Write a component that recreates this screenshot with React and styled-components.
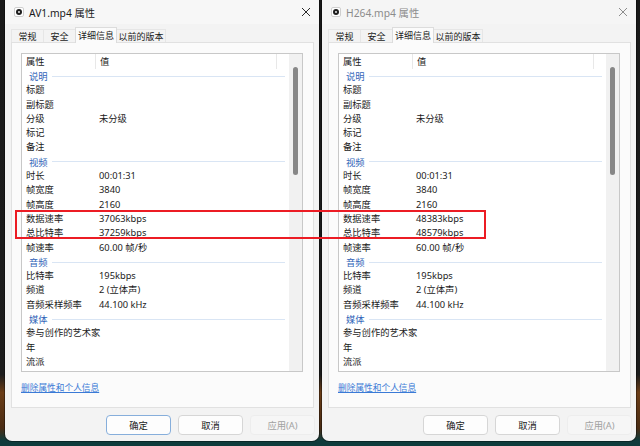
import React from 'react';
import styled, { createGlobalStyle } from 'styled-components';

const GlobalStyle = createGlobalStyle`
  html, body {
    margin: 0;
    padding: 0;
  }
  body {
    background: #151a1a;
    font-family: "Segoe UI", "Noto Sans", "Noto Sans CJK SC", sans-serif;
    color: #1b1b1b;
  }
`;

const Desktop = styled.div`
  position: relative;
  width: 640px;
  height: 446px;
  overflow: hidden;
  box-sizing: border-box;
  padding-left: 5px;
  display: flex;
  align-items: flex-start;
  gap: 3px;
  background: linear-gradient(
    to bottom,
    #191919 0%,
    #1c1c1c 84%,
    #6a3c16 88%,
    #4a2c14 96%,
    #0f3b3c 98.8%,
    #0f3b3c 100%
  );
`;

const Window = styled.div`
  width: 314px;
  height: 441px;
  background: #f3f3f3;
  border-radius: 0 0 7px 7px;
  box-shadow: 0 0 0 1px rgba(0, 0, 0, 0.35);
  display: flex;
  flex-direction: column;
  overflow: hidden;
`;

const TitleBar = styled.div`
  height: 24px;
  display: flex;
  align-items: center;
  gap: 5px;
  padding: 0 8px 0 9px;
  font-size: 10.3px;
  color: ${(p) => (p.$active ? '#1a1a1a' : '#8c8c8c')};
  background: ${(p) => (p.$active ? '#f7f7f7' : '#f5f5f5')};
`;

const TitleText = styled.span`
  flex: 1;
  white-space: nowrap;
`;

const Tabs = styled.div`
  display: flex;
  align-items: flex-end;
  height: 18px;
  padding-left: 6px;
`;

const Tab = styled.div`
  height: ${(p) => (p.$selected ? '16px' : '13px')};
  width: ${(p) => p.$w}px;
  box-sizing: border-box;
  display: flex;
  align-items: center;
  justify-content: center;
  font-size: 9px;
  white-space: nowrap;
  color: #1b1b1b;
  background: ${(p) => (p.$selected ? '#fbfbfb' : '#f3f3f3')};
  border: 1px solid ${(p) => (p.$selected ? '#dcdcdc' : '#e6e6e6')};
  border-bottom: none;
  margin-right: -1px;
  position: relative;
  z-index: ${(p) => (p.$selected ? 2 : 1)};
  margin-bottom: ${(p) => (p.$selected ? '-1px' : '0')};
`;

const Panel = styled.div`
  height: 366px;
  margin: 0 5px 0 6px;
  box-sizing: border-box;
  background: #fbfbfb;
  border: 1px solid #e1e1e1;
  padding: 10px 10px 0 9px;
  display: flex;
  flex-direction: column;
`;

const ListBox = styled.div`
  height: 319px;
  box-sizing: border-box;
  background: #fff;
  border: 1px solid #c8c8c8;
  display: flex;
  overflow: hidden;
`;

const Rows = styled.div`
  flex: 1;
  display: flex;
  flex-direction: column;
`;

const HeaderRow = styled.div`
  display: grid;
  grid-template-columns: 74px 181px 1fr;
  height: 15px;
  flex: none;
  font-size: 9.3px;
`;

const HeaderCell = styled.div`
  padding-left: 4px;
  line-height: 15px;
  border-right: ${(p) => (p.$last ? 'none' : '1px solid #e8e8e8')};
`;

const Row = styled.div`
  display: grid;
  grid-template-columns: 74px 1fr;
  height: 14.3px;
  flex: none;
  line-height: 14.3px;
  font-size: 9.3px;
  white-space: nowrap;
`;

const Label = styled.div`
  padding-left: 4px;
`;

const Value = styled.div`
  padding-left: 3px;
`;

const GroupRow = styled.div`
  display: flex;
  align-items: center;
  height: 14.3px;
  flex: none;
  padding: 0 4px 0 7px;
  font-size: 9.3px;
  color: #2f63b8;

  &::after {
    content: '';
    flex: 1;
    height: 1px;
    margin-left: 4px;
    background: #d9e5f4;
  }
`;

const ScrollTrack = styled.div`
  width: 13px;
  flex: none;
  background: #f1f1f1;
  display: flex;
  justify-content: center;
`;

const ScrollThumb = styled.div`
  width: 5px;
  height: 108px;
  margin-top: 13px;
  border-radius: 3px;
  background: #878787;
`;

const Link = styled.a`
  margin-top: 9px;
  font-size: 8.7px;
  line-height: 14px;
  color: #3a7ad6;
  text-decoration: underline;
  align-self: flex-start;
`;

const Footer = styled.div`
  flex: 1;
  display: flex;
  justify-content: flex-end;
  align-items: flex-start;
  gap: 7px;
  padding: 7px 4px 0 0;
`;

const Button = styled.div`
  width: 65px;
  height: 20px;
  box-sizing: border-box;
  border-radius: 4px;
  display: flex;
  align-items: center;
  justify-content: center;
  font-size: 9.3px;
  background: ${(p) => (p.$disabled ? '#f6f6f6' : '#fdfdfd')};
  color: ${(p) => (p.$disabled ? '#a2a2a2' : '#1b1b1b')};
  border: 1px solid
    ${(p) => (p.$primary ? '#86aedb' : p.$disabled ? '#ededed' : '#d6d6d6')};
`;

const Annotation = styled.div`
  position: absolute;
  left: 15px;
  top: 210px;
  width: 471px;
  height: 29px;
  box-sizing: border-box;
  border: 2px solid #ec1c24;
  pointer-events: none;
`;

function FileIcon() {
  return (
    <svg width="10" height="10" viewBox="0 0 10 10">
      <rect x="0.5" y="0.5" width="9" height="9" rx="1.5" fill="#fff" stroke="#cfcfcf" />
      <circle cx="5" cy="5" r="3" fill="#1e1e1e" />
      <circle cx="5" cy="5" r="0.9" fill="#fff" />
    </svg>
  );
}

function CloseIcon({ active }) {
  return (
    <svg width="10" height="10" viewBox="0 0 10 10">
      <path
        d="M1 1 L9 9 M9 1 L1 9"
        stroke={active ? '#2a2a2a' : '#8c8c8c'}
        strokeWidth="1"
        fill="none"
      />
    </svg>
  );
}

const common = [
  { group: '说明' },
  { label: '标题' },
  { label: '副标题' },
  { label: '分级', value: '未分级' },
  { label: '标记' },
  { label: '备注' },
  { group: '视频' },
  { label: '时长', value: '00:01:31' },
  { label: '帧宽度', value: '3840' },
  { label: '帧高度', value: '2160' },
  { label: '数据速率', key: 'dataRate' },
  { label: '总比特率', key: 'totalRate' },
  { label: '帧速率', value: '60.00 帧/秒' },
  { group: '音频' },
  { label: '比特率', value: '195kbps' },
  { label: '频道', value: '2 (立体声)' },
  { label: '音频采样频率', value: '44.100 kHz' },
  { group: '媒体' },
  { label: '参与创作的艺术家' },
  { label: '年' },
  { label: '流派' },
];

const tabs = [
  { name: '常规', w: 33 },
  { name: '安全', w: 33 },
  { name: '详细信息', w: 42 },
  { name: '以前的版本', w: 50 },
];

function PropertiesWindow({ title, active, rates }) {
  return (
    <Window>
      <TitleBar $active={active}>
        <FileIcon />
        <TitleText>{title}</TitleText>
        <CloseIcon active={active} />
      </TitleBar>
      <Tabs>
        {tabs.map((t) => (
          <Tab key={t.name} $w={t.w} $selected={t.name === '详细信息'}>
            {t.name}
          </Tab>
        ))}
      </Tabs>
      <Panel>
        <ListBox>
          <Rows>
            <HeaderRow>
              <HeaderCell>属性</HeaderCell>
              <HeaderCell>值</HeaderCell>
              <HeaderCell $last />
            </HeaderRow>
            {common.map((r, i) =>
              r.group ? (
                <GroupRow key={i}>{r.group}</GroupRow>
              ) : (
                <Row key={i}>
                  <Label>{r.label}</Label>
                  <Value>{r.key ? rates[r.key] : r.value || ''}</Value>
                </Row>
              )
            )}
          </Rows>
          <ScrollTrack>
            <ScrollThumb />
          </ScrollTrack>
        </ListBox>
        <Link href="#">删除属性和个人信息</Link>
      </Panel>
      <Footer>
        <Button $primary={active}>确定</Button>
        <Button>取消</Button>
        <Button $disabled>应用(A)</Button>
      </Footer>
    </Window>
  );
}

export default function App() {
  return (
    <>
      <GlobalStyle />
      <Desktop>
        <PropertiesWindow
          title="AV1.mp4 属性"
          active
          rates={{ dataRate: '37063kbps', totalRate: '37259kbps' }}
        />
        <PropertiesWindow
          title="H264.mp4 属性"
          rates={{ dataRate: '48383kbps', totalRate: '48579kbps' }}
        />
        <Annotation />
      </Desktop>
    </>
  );
}
